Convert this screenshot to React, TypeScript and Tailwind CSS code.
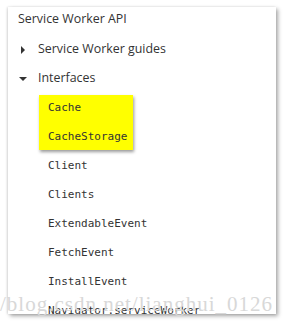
export default function App() {
  const rest = ["Client", "Clients", "ExtendableEvent", "FetchEvent", "InstallEvent", "Navigator.serviceWorker"];
  return (
    <div className="relative w-[287px] h-[330px] bg-white overflow-hidden pl-[8px] pt-[7px]">
      <div className="w-[268px] h-[307px] bg-white overflow-hidden shadow-[2px_2px_4px_rgba(0,0,0,0.35),-1px_0_2px_rgba(0,0,0,0.12)] pl-[10px] text-[#333] font-['Open_Sans',sans-serif]">
        <div className="h-[25px] flex items-center text-[12.4px]">Service Worker API</div>
        <div className="mt-[3px] h-[29px] flex items-center text-[12.4px]">
          <svg width="4" height="8" viewBox="0 0 4 8" className="ml-[3px] mr-[13px]">
            <path d="M0 0 L4 4 L0 8 Z" fill="#333" />
          </svg>
          Service Worker guides
        </div>
        <div className="h-[29px] flex items-center text-[12.4px]">
          <svg width="8" height="4" viewBox="0 0 8 4" className="ml-[1px] mr-[11px]">
            <path d="M0 0 L8 0 L4 4 Z" fill="#333" />
          </svg>
          Interfaces
        </div>
        <div className="font-['DejaVu_Sans_Mono',monospace] text-[11px]">
          <div className="mt-[2px] ml-[21px] w-[94px] h-[55px] bg-[#ffff00] shadow-[1px_2px_3px_rgba(0,0,0,0.4)] pl-[9px] pt-[2px] flex flex-col gap-[7px]">
            <div className="h-[22px] flex items-center">Cache</div>
            <div className="h-[22px] flex items-center">CacheStorage</div>
          </div>
          <div className="mt-[2px]">
            {rest.map((r) => (
              <div key={r} className="h-[29px] flex items-center pl-[30px]">{r}</div>
            ))}
          </div>
        </div>
      </div>
      <div className="absolute left-0 top-[292px] w-[287px] text-[21px] leading-[24px] tracking-[1px] text-[#d8d8d8] font-['Liberation_Serif',serif] whitespace-nowrap">
        /blog.csdn.net/lianghui_0126
      </div>
    </div>
  );
}
